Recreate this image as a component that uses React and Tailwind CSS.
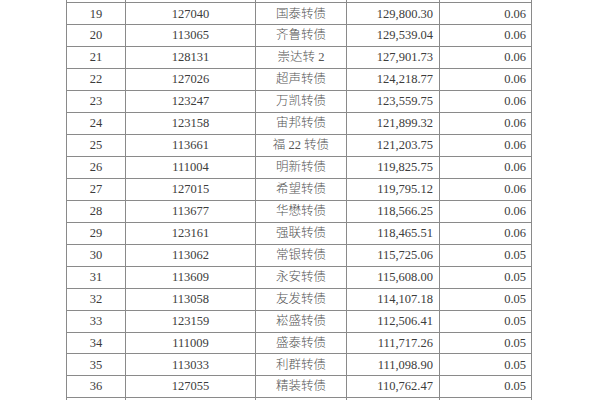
import React from "react";

const rows = [
  ["", "", "", "", ""],
  ["19", "127040", "国泰转债", "129,800.30", "0.06"],
  ["20", "113065", "齐鲁转债", "129,539.04", "0.06"],
  ["21", "128131", "崇达转 2", "127,901.73", "0.06"],
  ["22", "127026", "超声转债", "124,218.77", "0.06"],
  ["23", "123247", "万凯转债", "123,559.75", "0.06"],
  ["24", "123158", "宙邦转债", "121,899.32", "0.06"],
  ["25", "113661", "福 22 转债", "121,203.75", "0.06"],
  ["26", "111004", "明新转债", "119,825.75", "0.06"],
  ["27", "127015", "希望转债", "119,795.12", "0.06"],
  ["28", "113677", "华懋转债", "118,566.25", "0.06"],
  ["29", "123161", "强联转债", "118,465.51", "0.06"],
  ["30", "113062", "常银转债", "115,725.06", "0.05"],
  ["31", "113609", "永安转债", "115,608.00", "0.05"],
  ["32", "113058", "友发转债", "114,107.18", "0.05"],
  ["33", "123159", "崧盛转债", "112,506.41", "0.05"],
  ["34", "111009", "盛泰转债", "111,717.26", "0.05"],
  ["35", "113033", "利群转债", "111,098.90", "0.05"],
  ["36", "127055", "精装转债", "110,762.47", "0.05"],
  ["", "", "", "", ""],
];

export default function App() {
  return (
    <div className="w-[600px] h-[400px] overflow-hidden bg-white">
      <div
        className="mt-[-18.5px] ml-[66px] w-[466px] text-[12.5px] text-[#3c3c3c]"
        style={{ fontFamily: '"Liberation Serif", "Noto Sans CJK SC", serif' }}
      >
        {rows.map((r, i) => (
          <div
            key={i}
            className="grid grid-cols-[60px_130px_91px_93px_92px] h-[21.95px] border-b border-[#8a8a8a]"
          >
            <div className="border-l border-r border-[#8a8a8a] flex items-center justify-center">{r[0]}</div>
            <div className="border-r border-[#8a8a8a] flex items-center justify-center">{r[1]}</div>
            <div className="border-r border-[#8a8a8a] flex items-center justify-center">
              <span className="font-light text-[#555]">{r[2]}</span>
            </div>
            <div className="border-r border-[#8a8a8a] flex items-center justify-end pr-[6px]">{r[3]}</div>
            <div className="border-r border-[#8a8a8a] flex items-center justify-end pr-[5px]">{r[4]}</div>
          </div>
        ))}
      </div>
    </div>
  );
}
